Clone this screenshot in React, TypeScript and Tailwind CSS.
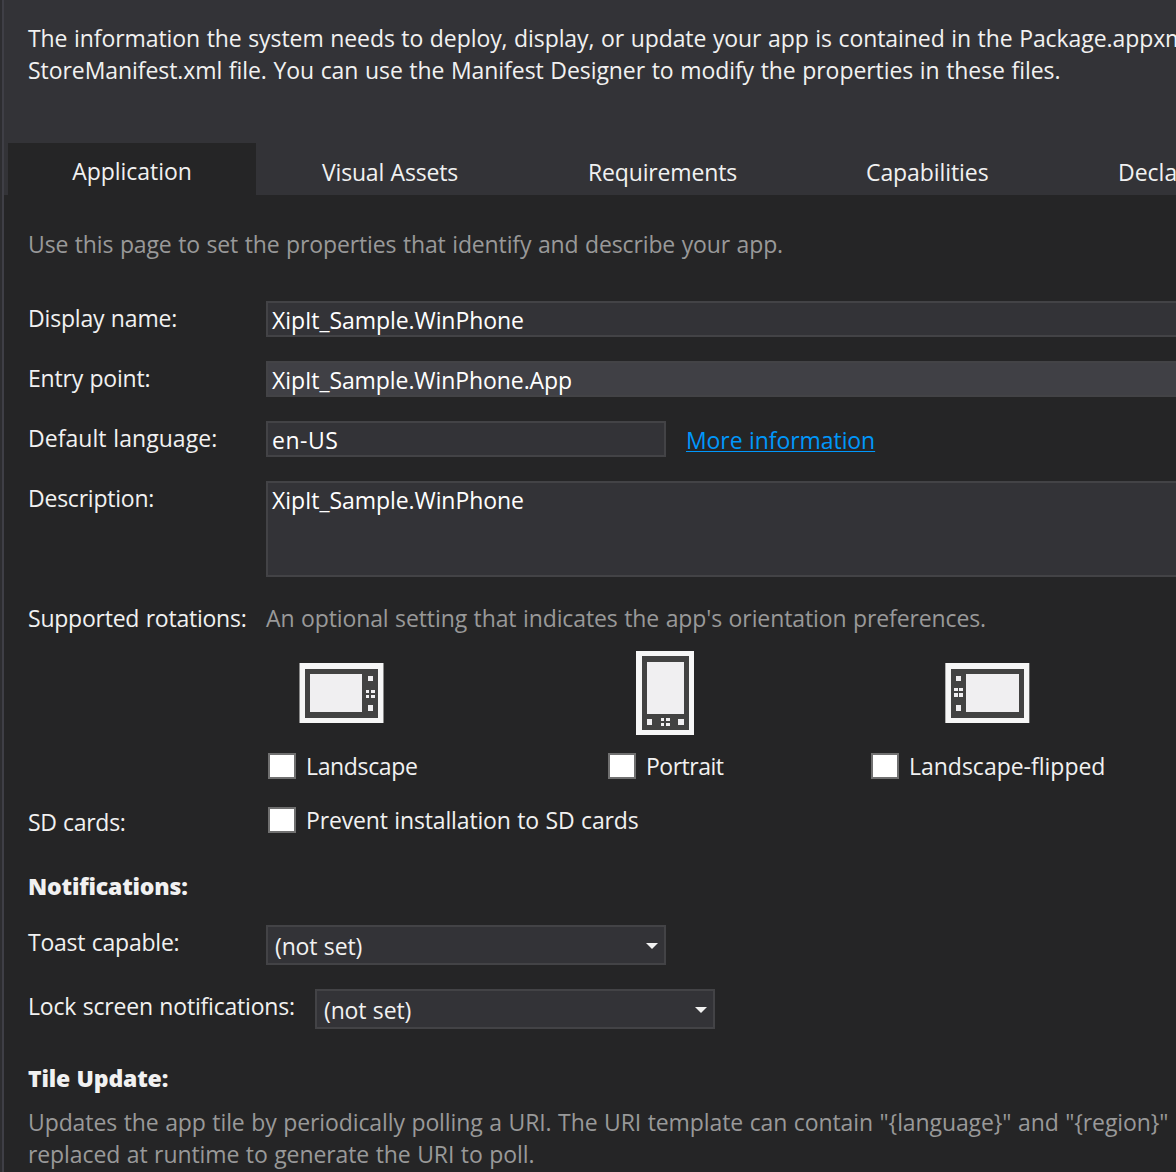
import type { ReactNode } from 'react';

function Row({ label, labelClass = '', className, children }: {
  label: string;
  labelClass?: string;
  className: string;
  children?: ReactNode;
}) {
  return (
    <div className={`flex shrink-0 items-start ${className}`}>
      <div className={`w-[238px] shrink-0 pt-px ${labelClass}`}>{label}</div>
      {children}
    </div>
  );
}

function Field({ className, children }: { className: string; children: ReactNode }) {
  return (
    <div className={`shrink-0 border-2 border-[#434346] pt-px pl-1 text-white ${className}`}>{children}</div>
  );
}

function Combo({ value }: { value: string }) {
  return (
    <div className="flex h-10 w-[400px] shrink-0 items-start justify-between border-2 border-[#434346] bg-[#333337] pt-[3px] pr-1.5 pl-[7px]">
      <span className="tracking-[-0.15px]">{value}</span>
      <svg width="12" height="6" viewBox="0 0 12 6" className="mt-[13px]">
        <path d="M0 0H12L6 6Z" fill="#f1f1f1" />
      </svg>
    </div>
  );
}

function Check({ label, className = '' }: { label: string; className?: string }) {
  return (
    <label className="flex items-start">
      <span className="h-[26px] w-7 shrink-0 border-2 border-[#707070] bg-white" />
      <span className={`-mt-[3px] pl-2.5 whitespace-nowrap ${className}`}>{label}</span>
    </label>
  );
}

function LandscapeIcon() {
  return (
    <svg width="85" height="60" viewBox="0 0 85 60" shapeRendering="crispEdges">
      <path d="M0 0H85V60H0Z" fill="#8a8a8a" />
      <path d="M1 0H84V60H1Z" fill="#f6f6f6" />
      <path d="M6 6H79V55H6Z" fill="#424242" />
      <path d="M11 11H63V49H11Z" fill="#f0eff1" />
      <path d="M69 13h5v5h-5zM69 42h5v6h-5zM67 27h3v3h-3zM72 27h4v3h-4zM67 32h3v3h-3zM72 32h4v3h-4z" fill="#f0eff1" />
    </svg>
  );
}

function PortraitIcon() {
  return (
    <svg width="58" height="84" viewBox="0 0 58 84" shapeRendering="crispEdges">
      <path d="M0 0H58V84H0Z" fill="#f6f6f6" />
      <path d="M6 5H53V79H6Z" fill="#424242" />
      <path d="M11 11H48V63H11Z" fill="#f0eff1" />
      <path d="M11 68h5v6h-5zM42 68h6v6h-6zM25 67h3v3h-3zM30 67h4v3h-4zM25 72h3v3h-3zM30 72h4v3h-4z" fill="#f0eff1" />
    </svg>
  );
}

function FlippedIcon() {
  return (
    <svg width="85" height="60" viewBox="0 0 85 60" shapeRendering="crispEdges">
      <path d="M0 0H1V60H0Z" fill="#b0b0b0" />
      <path d="M84 0H85V60H84Z" fill="#686868" />
      <path d="M1 0H84V60H1Z" fill="#f6f6f6" />
      <path d="M6 6H79V55H6Z" fill="#424242" />
      <path d="M21 11H74V49H21Z" fill="#f0eff1" />
      <path d="M11 13h5v5h-5zM11 42h5v6h-5zM9 25h4v3h-4zM14 25h4v3h-4zM9 30h4v4h-4zM14 30h4v4h-4z" fill="#f0eff1" />
    </svg>
  );
}

export default function App() {
  return (
    <div className="flex h-[1172px] w-[1176px] overflow-hidden bg-[#2d2d30] pl-0.5 font-['Open_Sans','Noto_Sans',sans-serif] text-[23px] leading-8 whitespace-nowrap text-[#f1f1f1] [word-spacing:0.7px]">
      <div className="flex min-w-0 flex-1 flex-col overflow-hidden border-l-2 border-[#3f3f46] bg-[#252526]">
        <header className="h-[195px] shrink-0 bg-[#333337]">
          <div className="h-[143px] pt-[22px] pl-6">
            <p className="tracking-[-0.08px]">
              The information the system needs to deploy, display, or update your app is contained in the Package.appxm
            </p>
            <p className="tracking-[-0.065px]">
              StoreManifest.xml file. You can use the Manifest Designer to modify the properties in these files.
            </p>
          </div>
          <nav className="flex h-[52px] pl-1">
            <div className="w-[248px] shrink-0 bg-[#252526] pt-3 text-center tracking-[-0.03px]">Application</div>
            <div className="w-[265px] shrink-0 pt-[13px] pl-[66px] tracking-[-0.18px]">Visual Assets</div>
            <div className="w-[278px] shrink-0 pt-[13px] pl-[67px] tracking-[-0.15px]">Requirements</div>
            <div className="w-[252px] shrink-0 pt-[13px] pl-[67px] tracking-[-0.08px]">Capabilities</div>
            <div className="shrink-0 pt-[13px] pl-[67px]">Declarations</div>
          </nav>
        </header>

        <main className="flex flex-col pl-6">
          <p className="mt-[33px] mb-[41px] tracking-[-0.13px] text-[#999999]">
            Use this page to set the properties that identify and describe your app.
          </p>

          <Row label="Display name:" labelClass="tracking-[-0.18px]" className="h-[60px]">
            <Field className="h-9 w-[1000px] bg-[#333337] tracking-[-0.07px]">XipIt_Sample.WinPhone</Field>
          </Row>
          <Row label="Entry point:" labelClass="tracking-[-0.2px]" className="h-[60px]">
            <Field className="h-9 w-[1000px] bg-[#404045] tracking-[-0.08px]">XipIt_Sample.WinPhone.App</Field>
          </Row>
          <Row label="Default language:" labelClass="tracking-[0.05px]" className="h-[60px]">
            <Field className="h-9 w-[400px] bg-[#333337] tracking-[0.5px]">en-US</Field>
            <a className="mt-[3px] ml-5 tracking-[-0.08px] text-[#0097fb] underline decoration-1 underline-offset-2">
              More information
            </a>
          </Row>
          <Row label="Description:" labelClass="tracking-[-0.23px]" className="h-[120px]">
            <Field className="h-24 w-[1000px] bg-[#333337] tracking-[-0.07px]">XipIt_Sample.WinPhone</Field>
          </Row>
          <Row label="Supported rotations:" labelClass="tracking-[-0.23px]" className="h-[50px]">
            <div className="pt-px tracking-[-0.11px] text-[#999999]">
              An optional setting that indicates the app's orientation preferences.
            </div>
          </Row>

          <div className="flex h-[156px] shrink-0 pl-60">
            <div className="w-[340px] shrink-0">
              <div className="h-[102px] pt-3 pl-[31px]"><LandscapeIcon /></div>
              <Check label="Landscape" className="tracking-[-0.35px]" />
            </div>
            <div className="w-[263px] shrink-0">
              <div className="h-[102px] pl-7"><PortraitIcon /></div>
              <Check label="Portrait" className="tracking-[-0.5px]" />
            </div>
            <div className="shrink-0">
              <div className="h-[102px] pt-3 pl-[74px]"><FlippedIcon /></div>
              <Check label="Landscape-flipped" className="tracking-[-0.01px]" />
            </div>
          </div>

          <div className="flex h-[63px] shrink-0 items-start">
            <div className="-mt-px w-60 shrink-0 tracking-[-0.3px]">SD cards:</div>
            <Check label="Prevent installation to SD cards" className="tracking-[-0.15px]" />
          </div>

          <h2 className="mb-[23px] font-extrabold tracking-[-0.18px]">Notifications:</h2>
          <Row label="Toast capable:" labelClass="tracking-[-0.23px]" className="h-16">
            <Combo value="(not set)" />
          </Row>
          <div className="flex h-[73px] shrink-0 items-start">
            <div className="w-[287px] shrink-0 pt-px tracking-[-0.19px]">Lock screen notifications:</div>
            <Combo value="(not set)" />
          </div>

          <h2 className="mb-3 font-extrabold tracking-[-0.17px]">Tile Update:</h2>
          <p className="tracking-[-0.1px] text-[#999999]">
            Updates the app tile by periodically polling a URI. The URI template can contain "{'{language}'}" and "{'{region}'}"
          </p>
          <p className="tracking-[-0.1px] text-[#999999]">replaced at runtime to generate the URI to poll.</p>
        </main>
      </div>
    </div>
  );
}
